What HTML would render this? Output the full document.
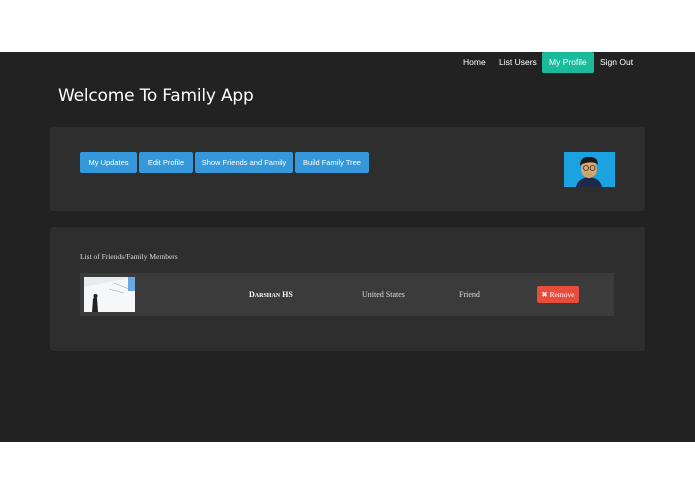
<!DOCTYPE html>
<html><head><meta charset="utf-8"><style>
body{margin:0;width:695px;height:494px;background:#fff;position:relative;overflow:hidden;font-family:"Liberation Sans",sans-serif}
.dark{position:absolute;left:0;top:52px;width:695px;height:390px;background:#222}
.nav{position:absolute;top:52px;height:21px;font-size:8.5px;color:#fff;line-height:21px}
.nav span{position:absolute;white-space:nowrap}
.act{background:#18bc9c;border-radius:2px;padding:0 7px;top:0;height:21px}
h1{position:absolute;left:58px;top:86px;margin:0;font-weight:normal;font-size:17px;color:#fff;font-family:"DejaVu Sans","Liberation Sans",sans-serif;letter-spacing:-0.2px}
.panel{position:absolute;left:50px;width:595px;background:#2e2e2e;border-radius:3px}
.btn{position:absolute;top:152px;height:21px;background:#3498db;color:#fff;font-size:7.5px;line-height:21px;text-align:center;border-radius:2px}
.serif{font-family:"Liberation Serif",serif;color:#ddd;position:absolute;font-size:8px}
</style></head><body>
<div class="dark"></div>
<div class="nav">
<span style="left:463px">Home</span>
<span style="left:499px">List Users</span>
<span class="act" style="left:542px">My Profile</span>
<span style="left:600px">Sign Out</span>
</div>
<h1>Welcome To Family App</h1>
<div class="panel" style="top:127px;height:84px"></div>
<div class="btn" style="left:80px;width:57px">My Updates</div>
<div class="btn" style="left:139px;width:54px">Edit Profile</div>
<div class="btn" style="left:195px;width:98px">Show Friends and Family</div>
<div class="btn" style="left:295px;width:74px">Build Family Tree</div>
<svg style="position:absolute;left:564px;top:152px" width="51" height="35" viewBox="0 0 51 35">
<rect width="51" height="35" fill="#1aa3e0"/>
<path d="M12 35 Q14 26 25 25 Q36 26 38 35Z" fill="#1e2a4a"/>
<ellipse cx="25" cy="17" rx="8" ry="9" fill="#d9a46c"/>
<path d="M16 14 Q16 4 26 5 Q34 5 34 13 L32 11 Q26 9 18 12Z" fill="#1a1a1a"/>
<circle cx="22" cy="16" r="2.5" fill="none" stroke="#333" stroke-width="0.8"/>
<circle cx="28.5" cy="16" r="2.5" fill="none" stroke="#333" stroke-width="0.8"/>
<path d="M22 22 Q25 24 28 22" stroke="#7a3" stroke-width="0.6" fill="none"/>
</svg>
<div class="panel" style="top:227px;height:124px"></div>
<div class="serif" style="left:80px;top:252px;font-size:7.5px">List of Friends/Family Members</div>
<div style="position:absolute;left:80px;top:273px;width:534px;height:43px;background:#3b3b3b"></div>
<svg style="position:absolute;left:84px;top:277px" width="51" height="35" viewBox="0 0 51 35">
<rect width="51" height="35" fill="#e8ecf0"/>
<path d="M0 10 L51 0 L51 35 L0 35Z" fill="#f6f7f9"/>
<path d="M30 6 L45 12 M25 12 L40 16" stroke="#8899aa" stroke-width="0.5"/>
<rect x="44" y="0" width="7" height="14" fill="#6aa8e0"/>
<path d="M8 35 L9 22 Q11 18 13 21 L14 35Z" fill="#222"/>
<circle cx="11.5" cy="19" r="2" fill="#222"/>
</svg>
<div class="serif" style="left:249px;top:290px;font-weight:bold;color:#fff;font-variant:small-caps">Darshan HS</div>
<div class="serif" style="left:362px;top:290px">United States</div>
<div class="serif" style="left:459px;top:290px">Friend</div>
<div style="position:absolute;left:537px;top:286px;width:42px;height:17px;background:#e74c3c;border-radius:2px;color:#fff;font-family:'Liberation Serif',serif;font-size:7.5px;line-height:17px;text-align:center">✖ Remove</div>
</body></html>
